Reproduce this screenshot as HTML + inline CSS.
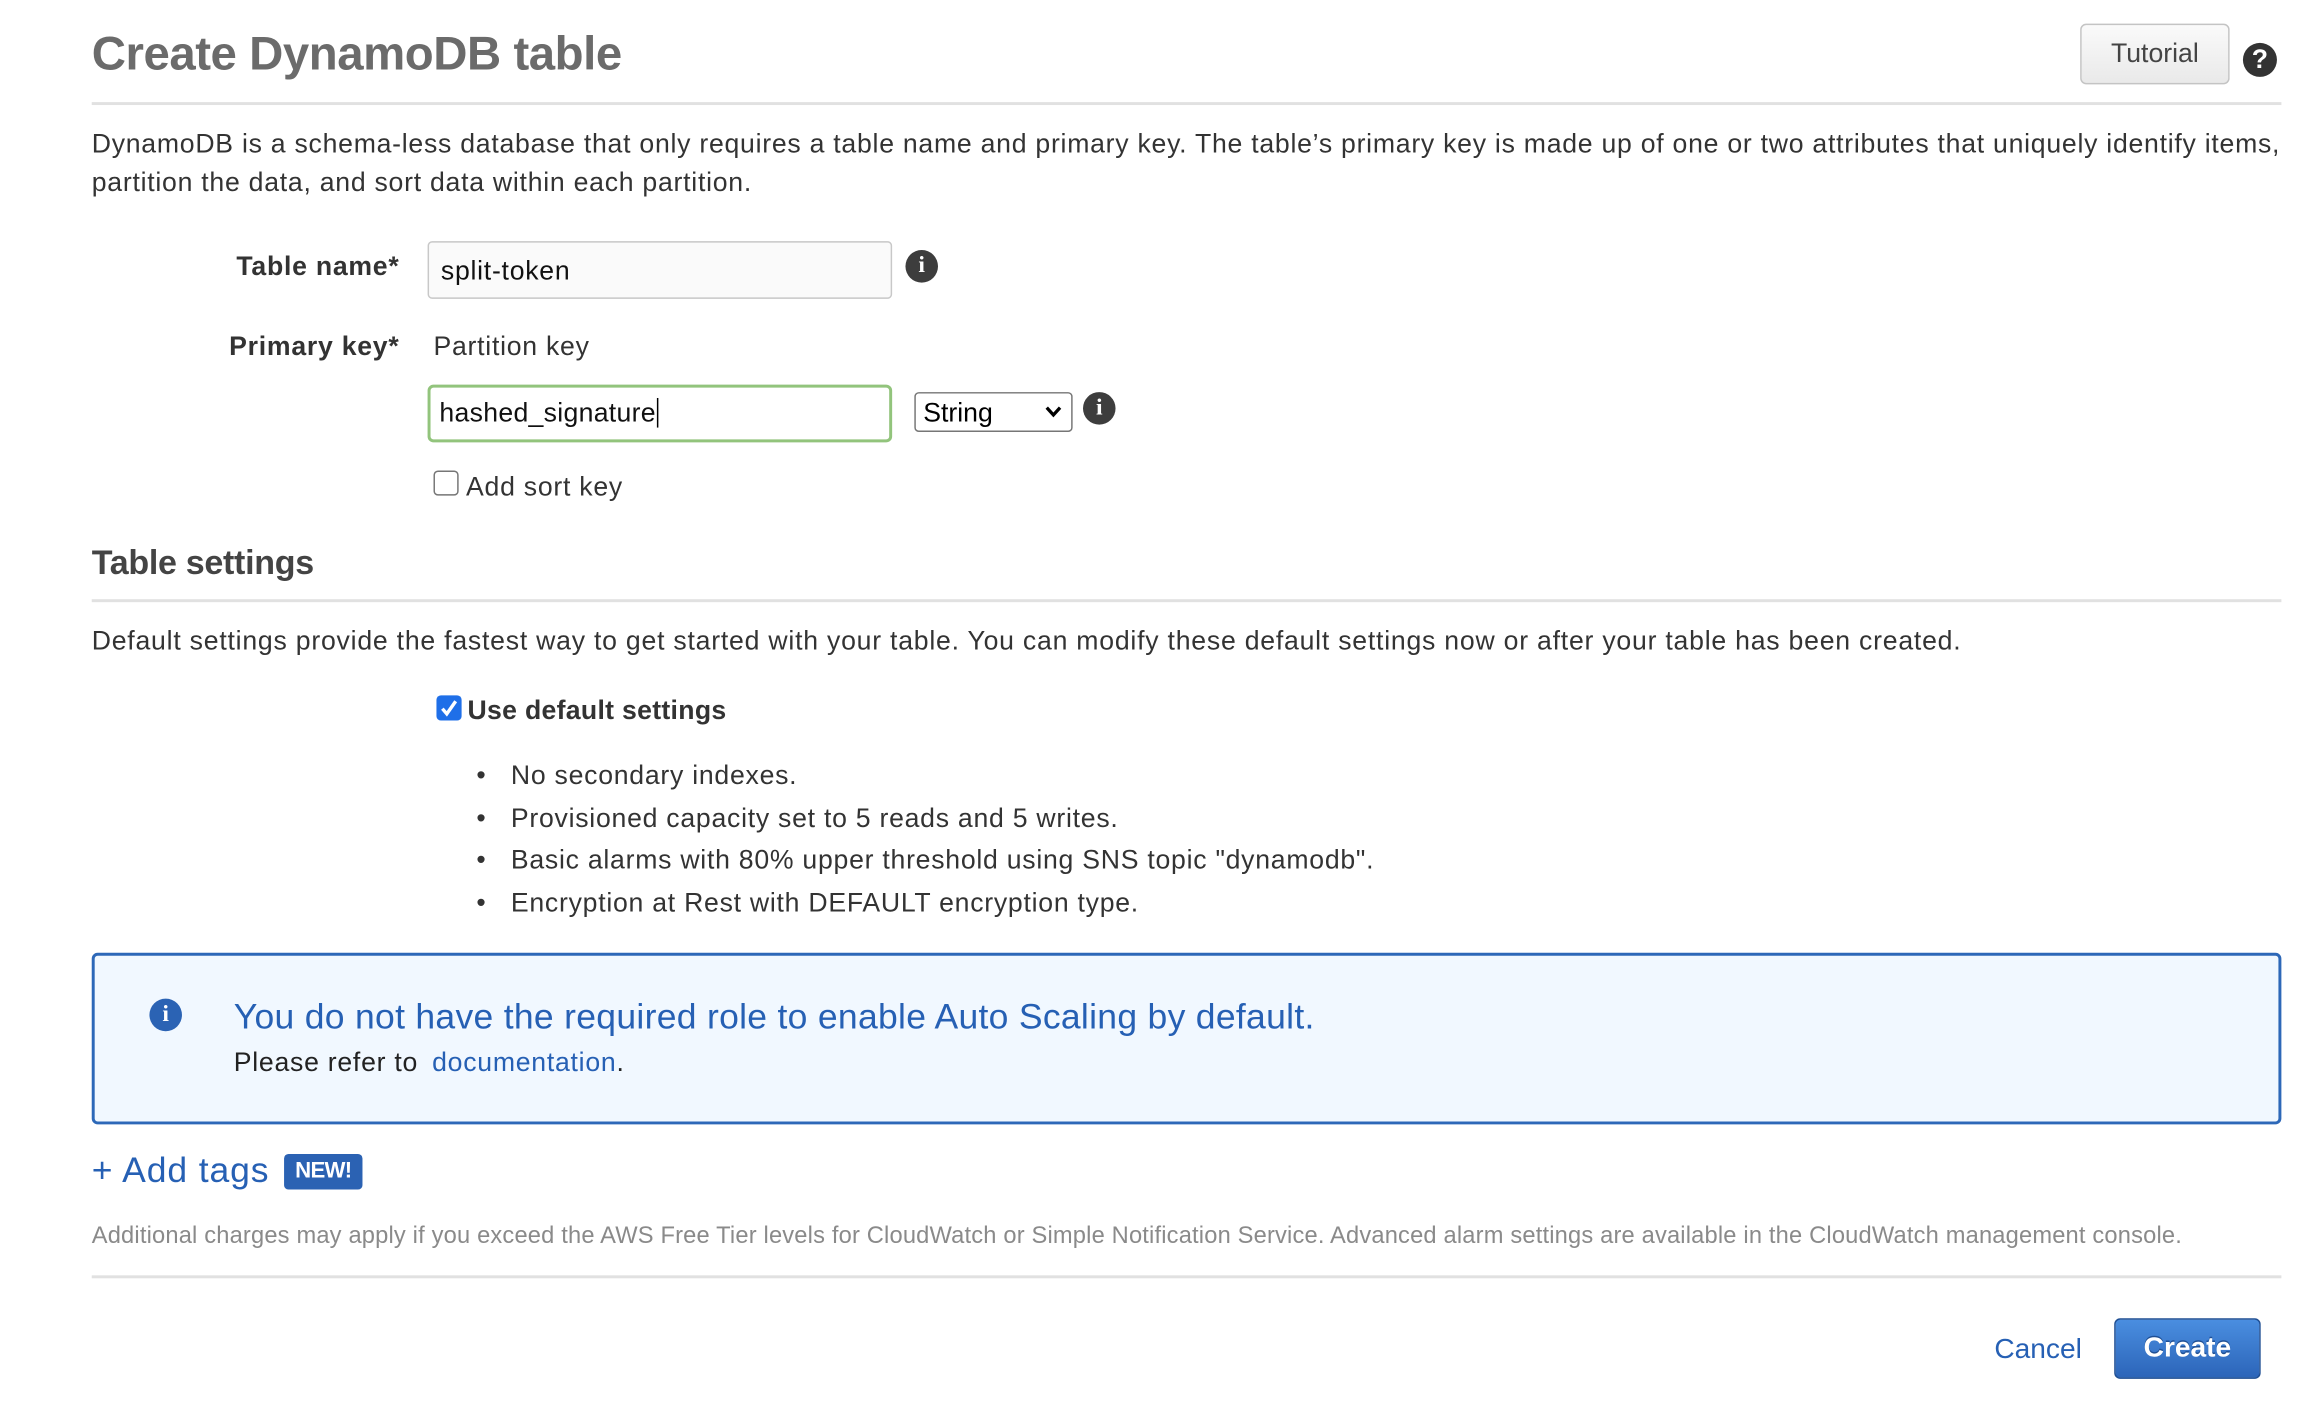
<!DOCTYPE html>
<html><head><meta charset="utf-8"><style>
html,body{margin:0;padding:0;background:#fff;width:2320px;height:1410px;overflow:hidden}
#w{position:absolute;left:0;top:0;width:1570px;height:953px;transform:scale(1.4795);transform-origin:0 0;font-family:"Liberation Sans",Arial,sans-serif;color:#333}
.a{position:absolute;white-space:nowrap;line-height:1}
.s{letter-spacing:0.5px}
.hr{position:absolute;left:62px;width:1480px;height:2px;background:#e1e1e1}
.info{position:absolute;width:22px;height:22px;border-radius:50%;background:#3d3d3d;color:#fff;font:bold 16px/22px "Liberation Serif",serif;text-align:center}
.cb{position:absolute;width:15px;height:15px;border:1px solid #767676;border-radius:3px;background:#fff}
</style></head><body><div id="w">
<div class="a" style="left:62px;top:20px;font-size:32px;color:#6b6b6b;font-weight:600;letter-spacing:-0.3px">Create DynamoDB table</div>
<div class="a" style="left:1406px;top:16px;width:99px;height:39px;border:1px solid #c4c4c4;border-radius:4px;background:linear-gradient(#fafafa,#e9e9e9);font-size:18px;text-align:center;line-height:39px;color:#444">Tutorial</div>
<div class="a" style="left:1516px;top:29px;width:23px;height:23px;border-radius:50%;background:#333;color:#fff;font:bold 18px/23px 'Liberation Sans',sans-serif;text-align:center">?</div>
<div class="hr" style="top:69px"></div>
<div class="a" style="left:62px;top:88px;font-size:18px;letter-spacing:0.5px">DynamoDB is a schema-less database that only requires a table name and primary key. The table’s primary key is made up of one or two attributes that uniquely identify items,</div>
<div class="a" style="left:62px;top:114px;font-size:18px;letter-spacing:0.5px">partition the data, and sort data within each partition.</div>

<div class="a s" style="right:1300px;top:171px;font-size:18px;font-weight:bold">Table name*</div>
<div class="a" style="left:289px;top:163px;width:314px;height:39px;border:1px solid #c8c8c8;border-radius:3px;background:#fafafa;box-sizing:border-box"></div>
<div class="a s" style="left:298px;top:174px;font-size:18px;color:#111">split-token</div>
<div class="info" style="left:612px;top:169px">i</div>

<div class="a s" style="right:1300px;top:225px;font-size:18px;font-weight:bold">Primary key*</div>
<div class="a s" style="left:293px;top:225px;font-size:18px">Partition key</div>
<div class="a" style="left:289px;top:260px;width:314px;height:39px;border:2px solid #92c47c;border-radius:4px;background:#fff;box-sizing:border-box"></div>
<div class="a" style="left:297px;top:270px;font-size:18px;color:#111;letter-spacing:0.2px">hashed_signature<span style="border-left:1px solid #000;margin-left:1px"></span></div>
<div class="a" style="left:618px;top:265px;width:107px;height:27px;border:1px solid #767676;border-radius:3px;box-sizing:border-box;background:#fff"></div>
<div class="a" style="left:624px;top:270px;font-size:18px;color:#000">String</div>
<svg class="a" style="left:706px;top:274px" width="12" height="9"><path d="M1.5 1.5 6 6.5 10.5 1.5" fill="none" stroke="#000" stroke-width="2.2"/></svg>
<div class="info" style="left:732px;top:265px">i</div>

<div class="cb" style="left:293px;top:318px"></div>
<div class="a s" style="left:315px;top:320px;font-size:18px">Add sort key</div>

<div class="a" style="left:62px;top:369px;font-size:23px;font-weight:bold;color:#444;letter-spacing:-0.2px">Table settings</div>
<div class="hr" style="top:405px"></div>
<div class="a" style="left:62px;top:424px;font-size:18px;letter-spacing:0.52px">Default settings provide the fastest way to get started with your table. You can modify these default settings now or after your table has been created.</div>

<div class="a" style="left:295px;top:470px;width:17px;height:17px;border-radius:3px;background:#1f6fe8"></div>
<svg class="a" style="left:297px;top:472px" width="13" height="13"><path d="M2 7 5 10.5 11 2" fill="none" stroke="#fff" stroke-width="2.3"/></svg>
<div class="a" style="left:316px;top:471px;font-size:18px;font-weight:bold;color:#333;letter-spacing:0.2px">Use default settings</div>

<div class="a s" style="left:322px;top:510px;font-size:18px;line-height:28.6px">
<div>•&nbsp;&nbsp; No secondary indexes.</div>
<div>•&nbsp;&nbsp; Provisioned capacity set to 5 reads and 5 writes.</div>
<div>•&nbsp;&nbsp; Basic alarms with 80% upper threshold using SNS topic "dynamodb".</div>
<div>•&nbsp;&nbsp; Encryption at Rest with DEFAULT encryption type.</div>
</div>

<div class="a" style="left:62px;top:644px;width:1480px;height:116px;box-sizing:border-box;border:2px solid #2d68b8;border-radius:4px;background:#f1f8ff"></div>
<div class="info" style="left:101px;top:675px;background:#2b63b4">i</div>
<div class="a" style="left:158px;top:676px;font-size:24px;color:#2660b4;letter-spacing:0.2px">You do not have the required role to enable Auto Scaling by default.</div>
<div class="a s" style="left:158px;top:709px;font-size:18px;color:#222">Please refer to <span style="color:#2660b4;margin-left:4px">documentation</span>.</div>

<div class="a" style="left:62px;top:780px;font-size:24px;color:#2660b4;letter-spacing:0.6px">+ Add tags</div>
<div class="a" style="left:192px;top:780px;width:53px;height:24px;background:#2b62b3;border-radius:3px;color:#fff;font-size:15px;font-weight:bold;line-height:24px;text-align:center;letter-spacing:-0.5px">NEW!</div>

<div class="a" style="left:62px;top:828px;font-size:16px;color:#8a8a8a;letter-spacing:0.12px">Additional charges may apply if you exceed the AWS Free Tier levels for CloudWatch or Simple Notification Service. Advanced alarm settings are available in the CloudWatch management console.</div>
<div class="hr" style="top:862px"></div>

<div class="a" style="left:1348px;top:903px;font-size:19px;color:#2660b4">Cancel</div>
<div class="a" style="left:1429px;top:891px;width:99px;height:41px;box-sizing:border-box;border:1px solid #1f4f94;border-radius:4px;background:linear-gradient(#4a8ee0,#2c65b9);color:#fff;font-size:19px;font-weight:bold;text-align:center;line-height:39px;text-shadow:0 -1px 0 #1f4f94">Create</div>
</div></body></html>
